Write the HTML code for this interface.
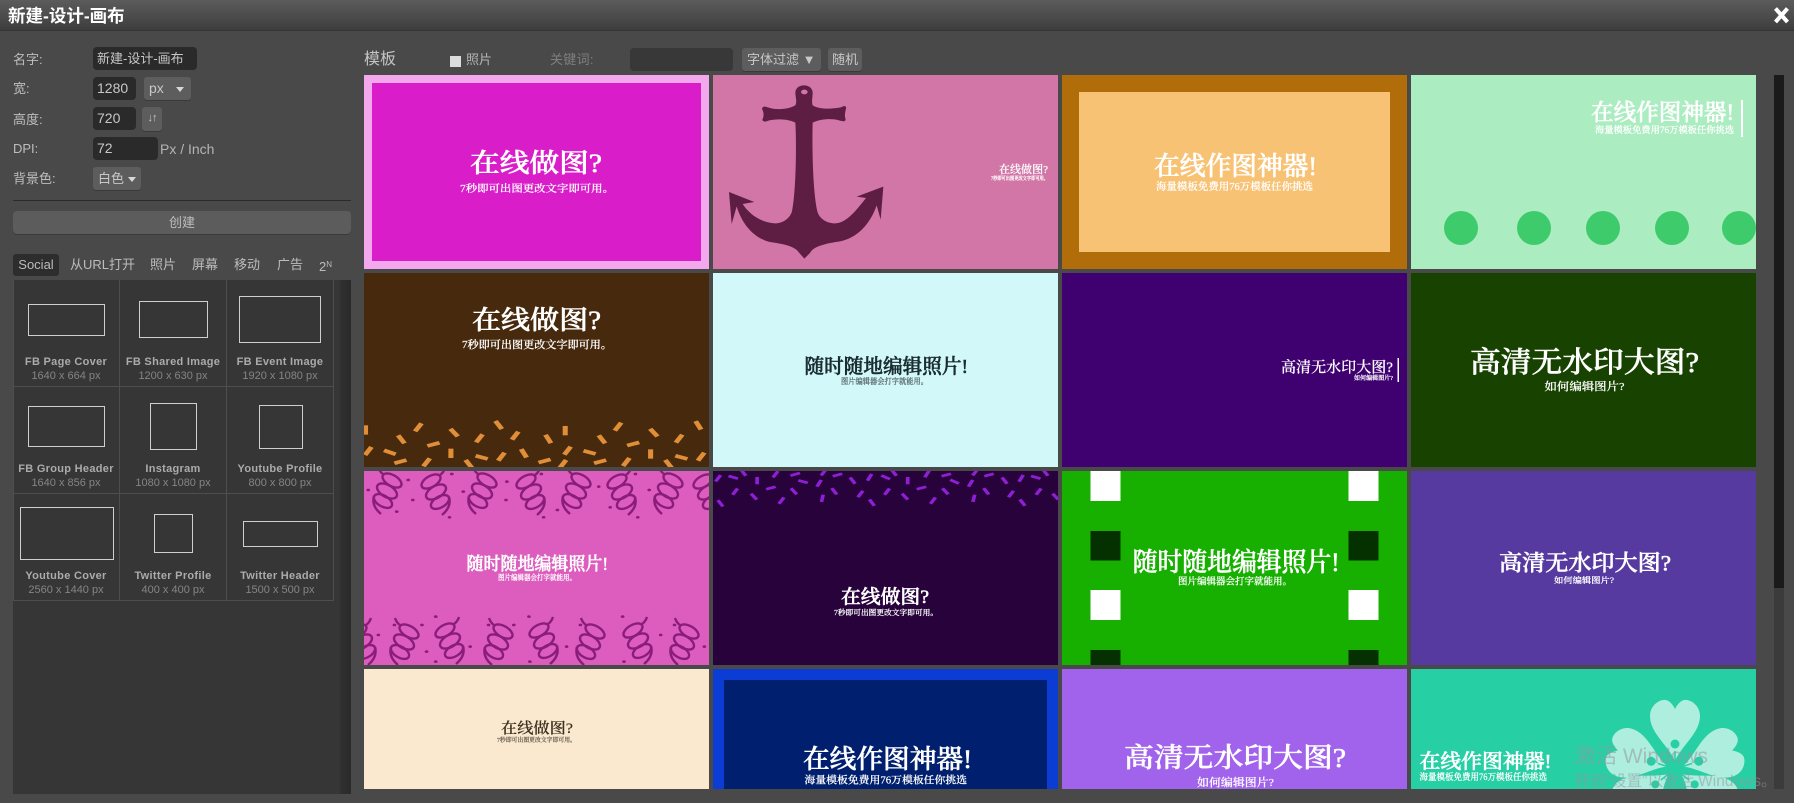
<!DOCTYPE html>
<html lang="zh"><head><meta charset="utf-8"><title>新建-设计-画布</title>
<style>
html,body{margin:0;padding:0;width:1794px;height:803px;overflow:hidden;background:#494949}
body{position:relative;font-family:"Liberation Sans","Noto Sans CJK SC",sans-serif;color:#c4c4c4;font-size:14px}
.a{position:absolute;white-space:nowrap}
.lb{position:absolute;left:13px;white-space:nowrap;line-height:20px;height:20px;color:#bdbdbd;font-size:13px}
.in{position:absolute;background:#2a2a2a;border-radius:4px;color:#c8c8c8;line-height:23px;height:23px;padding-left:4px;box-sizing:border-box;white-space:nowrap}
.sel{position:absolute;background:#5d5d5d;border-radius:3px;color:#c8c8c8;height:23px;line-height:23px;box-sizing:border-box;white-space:nowrap;box-shadow:0 1px 0 #3a3a3a;font-size:13px}
.car{position:absolute;width:0;height:0;border-left:4.5px solid transparent;border-right:4.5px solid transparent;border-top:5px solid #d8d8d8}
.tab{position:absolute;top:254px;height:22px;line-height:22px;font-size:13px;color:#bcbcbc;white-space:nowrap}
.n{position:absolute;width:106px;text-align:center;font-weight:bold;font-size:11px;letter-spacing:.3px;color:#ababab;white-space:nowrap}
.p{position:absolute;width:106px;text-align:center;font-size:11px;color:#858585;white-space:nowrap}
.r{position:absolute;box-sizing:border-box;border:1px solid #cfcfcf}
.l{position:absolute;background:#4e4e4e}
svg text{font-family:"Liberation Serif","Noto Serif CJK SC",serif;font-weight:500;fill:#fff;stroke:#fff;stroke-width:.2px}
svg text[font-size="18"],svg text[font-size="19"],svg text[font-size="20"],svg text[font-size="22"],svg text[font-size="23"],svg text[font-size="26"],svg text[font-size="27"],svg text[font-size="29"]{stroke-width:.6px}
</style></head><body>
<div class="a" style="left:0;top:0;width:1794px;height:30px;background:linear-gradient(#5c5c5c,#3d3d3d);border-bottom:1px solid #353535"></div>
<div class="a" style="left:8px;top:4px;font-size:17.5px;font-weight:bold;color:#fff;line-height:24px">新建-设计-画布</div>

<div class="lb" style="top:50px">名字:</div>
<div class="in" style="left:93px;top:47px;width:104px;font-size:13px">新建-设计-画布</div>
<div class="lb" style="top:79px">宽:</div>
<div class="in" style="left:93px;top:77px;width:43px">1280</div>
<div class="sel" style="left:144px;top:77px;width:47px;padding-left:5px;font-size:14px">px<span class="car" style="left:32px;top:10px"></span></div>
<div class="lb" style="top:110px">高度:</div>
<div class="in" style="left:93px;top:107px;width:43px">720</div>
<div class="sel" style="left:142px;top:107px;width:20px;height:24px;text-align:center;font-size:11px;font-weight:bold;letter-spacing:-1px">↓↑</div>
<div class="lb" style="top:139px">DPI:</div>
<div class="in" style="left:93px;top:137px;width:65px">72</div>
<div class="a" style="left:160px;top:139px;line-height:20px;color:#b4b4b4">Px / Inch</div>
<div class="lb" style="top:169px">背景色:</div>
<div class="sel" style="left:93px;top:167px;width:48px;padding-left:5px">白色<span class="car" style="left:35px;top:10px"></span></div>
<div class="a" style="left:13px;top:200px;width:338px;height:1px;background:#2b2b2b"></div>
<div class="sel" style="left:13px;top:211px;width:338px;height:23px;text-align:center;border-radius:4px;background:#5c5c5c;color:#bdbdbd">创建</div>

<div class="tab" style="left:13px;width:46px;background:#2d2d2d;border-radius:3px;text-align:center">Social</div>
<div class="tab" style="left:70px">从URL打开</div>
<div class="tab" style="left:150px">照片</div>
<div class="tab" style="left:192px">屏幕</div>
<div class="tab" style="left:234px">移动</div>
<div class="tab" style="left:277px">广告</div>
<div class="tab" style="left:319px">2<span style="font-size:8px;vertical-align:4px">N</span></div>

<div class="a" style="left:13px;top:280px;width:328px;height:514px;background:#363636"></div>
<div class="a" style="left:340px;top:280px;width:11px;height:514px;background:linear-gradient(90deg,#303030,#2a2a2a)"></div>
<div class="l" style="left:13px;top:280px;width:1px;height:321px"></div>
<div class="l" style="left:119px;top:280px;width:1px;height:321px"></div>
<div class="l" style="left:226px;top:280px;width:1px;height:321px"></div>
<div class="l" style="left:333px;top:280px;width:1px;height:321px"></div>
<div class="l" style="left:13px;top:386px;width:321px;height:1px"></div>
<div class="l" style="left:13px;top:493px;width:321px;height:1px"></div>
<div class="l" style="left:13px;top:600px;width:321px;height:1px"></div>

<div class="r" style="left:28px;top:304px;width:77px;height:32px"></div>
<div class="r" style="left:139px;top:301px;width:69px;height:37px"></div>
<div class="r" style="left:239px;top:296px;width:82px;height:47px"></div>
<div class="r" style="left:28px;top:406px;width:77px;height:41px"></div>
<div class="r" style="left:150px;top:403px;width:47px;height:47px"></div>
<div class="r" style="left:259px;top:405px;width:44px;height:44px"></div>
<div class="r" style="left:20px;top:507px;width:94px;height:53px"></div>
<div class="r" style="left:154px;top:514px;width:39px;height:39px"></div>
<div class="r" style="left:243px;top:521px;width:75px;height:26px"></div>

<div class="n" style="left:13px;top:356px">FB Page Cover</div><div class="p" style="left:13px;top:370px">1640 x 664 px</div>
<div class="n" style="left:120px;top:356px">FB Shared Image</div><div class="p" style="left:120px;top:370px">1200 x 630 px</div>
<div class="n" style="left:227px;top:356px">FB Event Image</div><div class="p" style="left:227px;top:370px">1920 x 1080 px</div>
<div class="n" style="left:13px;top:463px">FB Group Header</div><div class="p" style="left:13px;top:477px">1640 x 856 px</div>
<div class="n" style="left:120px;top:463px">Instagram</div><div class="p" style="left:120px;top:477px">1080 x 1080 px</div>
<div class="n" style="left:227px;top:463px">Youtube Profile</div><div class="p" style="left:227px;top:477px">800 x 800 px</div>
<div class="n" style="left:13px;top:570px">Youtube Cover</div><div class="p" style="left:13px;top:584px">2560 x 1440 px</div>
<div class="n" style="left:120px;top:570px">Twitter Profile</div><div class="p" style="left:120px;top:584px">400 x 400 px</div>
<div class="n" style="left:227px;top:570px">Twitter Header</div><div class="p" style="left:227px;top:584px">1500 x 500 px</div>

<div class="a" style="left:364px;top:48px;font-size:16px;line-height:24px;color:#c4c4c4">模板</div>
<div class="a" style="left:450px;top:56px;width:11px;height:11px;background:#dcdcdc"></div>
<div class="a" style="left:466px;top:50px;font-size:13px;line-height:20px;color:#b4b4b4">照片</div>
<div class="a" style="left:550px;top:50px;font-size:13px;line-height:20px;color:#7e7e7e;letter-spacing:.3px">关键词:</div>
<div class="a" style="left:630px;top:48px;width:103px;height:23px;background:#383838;border-radius:4px"></div>
<div class="sel" style="left:742px;top:48px;width:79px;padding-left:5px">字体过滤 ▼</div>
<div class="sel" style="left:828px;top:48px;width:34px;padding-left:4px">随机</div>

<svg class="a" style="left:0;top:0" width="1794" height="803" viewBox="0 0 1794 803" xmlns="http://www.w3.org/2000/svg">
<defs>
<rect id="c" x="-5.500" y="-14" width="11" height="28"/>
<rect id="d" x="-4" y="-11" width="8" height="22"/>
<g id="s" fill="none" stroke-width="2.400">
<ellipse cx="5" cy="-10.500" rx="10.500" ry="5.500" transform="rotate(30 5 -10.500)"/>
<ellipse cx="0" cy="0" rx="11" ry="6" transform="rotate(30 0 0)"/>
<ellipse cx="-4" cy="10" rx="10" ry="5.500" transform="rotate(30 -4 10)"/>
<path d="M-13 5C-15 12-12 18-6 23M-4 -17C-7 -19-8 -21-9 -24"/>
</g>
<path id="h" d="M0-8C-7-24-25-36-25-53C-25-64-15-70-9-69C-5-68-2-64 0-60C2-64 5-68 9-69C15-70 25-64 25-53C25-36 7-24 0-8Z"/>
</defs>

<svg x="364" y="75" width="345" height="194" viewBox="364 75 345 194">
<rect x="364" y="75" width="345" height="194" fill="#f3a8ee"/><rect x="372" y="83" width="329" height="178" fill="#d91ec9"/>
<text x="470" y="172" font-size="26" textLength="132" lengthAdjust="spacingAndGlyphs">在线做图?</text>
<text x="460" y="192" font-size="10" textLength="154" lengthAdjust="spacingAndGlyphs">7秒即可出图更改文字即可用。</text>
</svg>

<svg x="713" y="75" width="345" height="194" viewBox="713 75 345 194">
<rect x="713" y="75" width="345" height="194" fill="#d176a6"/>
<g transform="translate(720 78) scale(.33333)">
<path fill="#5e1d42" fill-rule="evenodd" d="M252 22C268 22 278 32 278 44C278 58 274 70 278 82C300 96 340 92 362 88L372 84C378 84 380 88 377 96C374 108 374 118 377 124C376 132 368 130 360 128C340 120 300 122 278 134C276 200 278 340 292 400C298 422 320 436 345 436C380 436 410 395 438 360L410 356L490 326L482 425L470 382C450 440 410 480 360 490C320 496 280 504 270 525L253 542L238 525C225 504 190 498 150 492C110 482 70 450 50 385L35 438L27 342L103 372L68 378C85 405 120 434 165 436C190 436 210 420 216 400C228 340 230 200 226 134C205 122 165 122 145 128C138 132 128 132 127 125C132 115 132 105 127 95C125 88 130 85 136 86L150 90C170 96 205 94 226 82C232 70 226 58 226 44C226 32 236 22 252 22ZM253 35A10 7 0 1 0 253.100 49A10 7 0 1 0 253 35Z"/>
</g>
<text x="999" y="173" font-size="11" textLength="49" lengthAdjust="spacingAndGlyphs">在线做图?</text>
<text x="991" y="180" font-size="5" textLength="57" lengthAdjust="spacingAndGlyphs">7秒即可出图更改文字即可用。</text>
</svg>

<svg x="1062" y="75" width="345" height="194" viewBox="1062 75 345 194">
<rect x="1062" y="75" width="345" height="194" fill="#b26d0b"/><rect x="1079" y="92" width="311" height="160" fill="#f8c275"/>
<text x="1154" y="175" font-size="26" textLength="163" lengthAdjust="spacingAndGlyphs">在线作图神器!</text>
<text x="1156" y="190" font-size="10" textLength="157" lengthAdjust="spacingAndGlyphs">海量模板免费用76万模板任你挑选</text>
</svg>

<svg x="1411" y="75" width="345" height="194" viewBox="1411 75 345 194">
<rect x="1411" y="75" width="345" height="194" fill="#abecc0"/>
<g fill="#3ecb6c"><circle cx="1461" cy="228" r="17"/><circle cx="1534" cy="228" r="17"/><circle cx="1603" cy="228" r="17"/><circle cx="1672" cy="228" r="17"/><circle cx="1739" cy="228" r="17"/></g>
<text x="1591" y="120" font-size="23" textLength="143" lengthAdjust="spacingAndGlyphs">在线作图神器!</text>
<text x="1595" y="133" font-size="9" textLength="139" lengthAdjust="spacingAndGlyphs">海量模板免费用76万模板任你挑选</text>
<rect x="1741" y="100" width="2" height="37" fill="#fff"/>
</svg>

<svg x="364" y="273" width="345" height="194" viewBox="364 273 345 194">
<rect x="364" y="273" width="345" height="194" fill="#472a0e"/>
<g transform="translate(360 270) scale(.4591 .3333)" fill="#e08e37">
<use href="#c" transform="translate(12 480)"/><use href="#c" transform="translate(127 472) rotate(30)"/><use href="#c" transform="translate(90 508) rotate(-30)"/><use href="#c" transform="translate(205 488) rotate(-35)"/><use href="#c" transform="translate(260 505) rotate(30)"/><use href="#c" transform="translate(302 465) rotate(-30)"/><use href="#c" transform="translate(338 497) rotate(30)"/><use href="#c" transform="translate(410 507) rotate(-25)"/><use href="#c" transform="translate(447 482)"/><use href="#c" transform="translate(562 470) rotate(30)"/><use href="#c" transform="translate(527 508) rotate(-30)"/><use href="#c" transform="translate(640 488) rotate(-35)"/><use href="#c" transform="translate(695 506) rotate(30)"/><use href="#c" transform="translate(737 466) rotate(-25)"/><use href="#c" transform="translate(18 543) rotate(30)"/><use href="#c" transform="translate(65 547) rotate(-65)"/><use href="#c" transform="translate(160 523) rotate(70)"/><use href="#c" transform="translate(198 550)"/><use href="#c" transform="translate(265 562) rotate(-70)"/><use href="#c" transform="translate(308 560) rotate(30)"/><use href="#c" transform="translate(357 550) rotate(-25)"/><use href="#c" transform="translate(452 542) rotate(30)"/><use href="#c" transform="translate(500 547) rotate(-70)"/><use href="#c" transform="translate(595 522) rotate(70)"/><use href="#c" transform="translate(633 552)"/><use href="#c" transform="translate(700 562) rotate(-70)"/><use href="#c" transform="translate(743 560) rotate(30)"/><use href="#c" transform="translate(88 575) rotate(70)"/><use href="#c" transform="translate(145 577) rotate(30)"/><use href="#c" transform="translate(237 582) rotate(-30)"/><use href="#c" transform="translate(402 573) rotate(70)"/><use href="#c" transform="translate(442 582) rotate(30)"/><use href="#c" transform="translate(523 575) rotate(70)"/><use href="#c" transform="translate(580 576) rotate(30)"/><use href="#c" transform="translate(672 582) rotate(-30)"/>
</g>
<text x="472" y="329" font-size="26" textLength="129" lengthAdjust="spacingAndGlyphs">在线做图?</text>
<text x="462" y="348" font-size="10.500" textLength="150" lengthAdjust="spacingAndGlyphs">7秒即可出图更改文字即可用。</text>
</svg>

<svg x="713" y="273" width="345" height="194" viewBox="713 273 345 194">
<rect x="713" y="273" width="345" height="194" fill="#d2f8fa"/>
<text style="fill:#1a2c30;stroke:#1a2c30" x="804.500" y="373" font-size="20" textLength="163.500" lengthAdjust="spacingAndGlyphs">随时随地编辑照片!</text>
<text style="fill:#5a6a6e;stroke:#5a6a6e" x="841" y="384" font-size="8" textLength="87" lengthAdjust="spacingAndGlyphs">图片编辑器会打字就能用。</text>
</svg>

<svg x="1062" y="273" width="345" height="194" viewBox="1062 273 345 194">
<rect x="1062" y="273" width="345" height="194" fill="#3f0070"/>
<text x="1281" y="372" font-size="15" textLength="112" lengthAdjust="spacingAndGlyphs">高清无水印大图?</text>
<text x="1354" y="380" font-size="6" textLength="39" lengthAdjust="spacingAndGlyphs">如何编辑图片?</text>
<rect x="1397.500" y="358" width="1.500" height="24" fill="#fff"/>
</svg>

<svg x="1411" y="273" width="345" height="194" viewBox="1411 273 345 194">
<rect x="1411" y="273" width="345" height="194" fill="#174200"/>
<text x="1470" y="372" font-size="29" textLength="229" lengthAdjust="spacingAndGlyphs">高清无水印大图?</text>
<text x="1544.500" y="390" font-size="11" textLength="80" lengthAdjust="spacingAndGlyphs">如何编辑图片?</text>
</svg>

<svg x="364" y="471" width="345" height="194" viewBox="364 471 345 194">
<rect x="364" y="471" width="345" height="194" fill="#dc5dbd"/>
<g stroke="#8a1d7a">
<use href="#s" transform="translate(387 491)"/><use href="#s" transform="translate(436 492) scale(-1 1)"/><use href="#s" transform="translate(482 491)"/><use href="#s" transform="translate(531 492) scale(-1 1)"/><use href="#s" transform="translate(576 491)"/><use href="#s" transform="translate(622 492) scale(-1 1)"/><use href="#s" transform="translate(668 491)"/><use href="#s" transform="translate(708 492) scale(-1 1)"/>
<use href="#s" transform="translate(362 642) scale(-1 1)"/><use href="#s" transform="translate(404 642)"/><use href="#s" transform="translate(450 641) scale(-1 1)"/><use href="#s" transform="translate(498 642)"/><use href="#s" transform="translate(544 641) scale(-1 1)"/><use href="#s" transform="translate(590 642)"/><use href="#s" transform="translate(638 641) scale(-1 1)"/><use href="#s" transform="translate(684 642)"/>
</g>
<g transform="translate(360 270) scale(.4591 .3333)" fill="#8a1d7a">
<circle cx="18" cy="660" r="4"/><circle cx="115" cy="690" r="4"/><circle cx="200" cy="612" r="4"/><circle cx="195" cy="742" r="4"/><circle cx="105" cy="630" r="4"/><circle cx="225" cy="665" r="4"/><circle cx="318" cy="690" r="4"/><circle cx="395" cy="612" r="4"/><circle cx="400" cy="742" r="4"/><circle cx="320" cy="635" r="4"/><circle cx="430" cy="720" r="4"/><circle cx="520" cy="650" r="4"/><circle cx="545" cy="712" r="4"/><circle cx="600" cy="612" r="4"/><circle cx="605" cy="742" r="4"/><circle cx="630" cy="660" r="4"/><circle cx="80" cy="725" r="4"/><circle cx="75" cy="1065" r="4"/><circle cx="135" cy="1065" r="4"/><circle cx="145" cy="1145" r="4"/><circle cx="165" cy="1040" r="4"/><circle cx="165" cy="1175" r="4"/><circle cx="240" cy="1130" r="4"/><circle cx="280" cy="1065" r="4"/><circle cx="335" cy="1065" r="4"/><circle cx="368" cy="1040" r="4"/><circle cx="370" cy="1175" r="4"/><circle cx="450" cy="1130" r="4"/><circle cx="480" cy="1065" r="4"/><circle cx="572" cy="1040" r="4"/><circle cx="575" cy="1175" r="4"/><circle cx="655" cy="1095" r="4"/><circle cx="685" cy="1065" r="4"/><circle cx="750" cy="1130" r="4"/><circle cx="40" cy="1095" r="4"/>
</g>
<text x="466.500" y="570" font-size="18" textLength="141.500" lengthAdjust="spacingAndGlyphs">随时随地编辑照片!</text>
<text x="498" y="580" font-size="7.500" textLength="78" lengthAdjust="spacingAndGlyphs">图片编辑器会打字就能用。</text>
</svg>

<svg x="713" y="471" width="345" height="194" viewBox="713 471 345 194">
<rect x="713" y="471" width="345" height="194" fill="#27023b"/>
<g transform="translate(360 270) scale(.4591 .3333)" fill="#8f1fd6">
<use href="#d" transform="translate(780 625) rotate(30)"/><use href="#d" transform="translate(813 622) rotate(-70)"/><use href="#d" transform="translate(835 608) rotate(-30)"/><use href="#d" transform="translate(865 632)"/><use href="#d" transform="translate(817 665) rotate(30)"/><use href="#d" transform="translate(858 680) rotate(-35)"/><use href="#d" transform="translate(905 613) rotate(30)"/><use href="#d" transform="translate(948 613) rotate(70)"/><use href="#d" transform="translate(965 635) rotate(-70)"/><use href="#d" transform="translate(895 654) rotate(70)"/><use href="#d" transform="translate(945 664) rotate(-35)"/><use href="#d" transform="translate(918 692) rotate(30)"/><use href="#d" transform="translate(785 700) rotate(-30)"/><use href="#d" transform="translate(1010 607) rotate(30)"/><use href="#d" transform="translate(1040 615) rotate(70)"/><use href="#d" transform="translate(1073 632) rotate(-30)"/><use href="#d" transform="translate(1110 622) rotate(25)"/><use href="#d" transform="translate(1000 640) rotate(25)"/><use href="#d" transform="translate(1033 664) rotate(-30)"/><use href="#d" transform="translate(1007 685) rotate(10)"/><use href="#d" transform="translate(1090 672) rotate(30)"/><use href="#d" transform="translate(1115 698) rotate(-30)"/><use href="#d" transform="translate(1145 622) rotate(-60)"/><use href="#d" transform="translate(1163 608) rotate(-30)"/><use href="#d" transform="translate(1193 632)"/><use href="#d" transform="translate(1148 665) rotate(30)"/><use href="#d" transform="translate(1187 680) rotate(-35)"/><use href="#d" transform="translate(1235 612) rotate(25)"/><use href="#d" transform="translate(1277 615) rotate(70)"/><use href="#d" transform="translate(1295 635) rotate(-60)"/><use href="#d" transform="translate(1223 654) rotate(70)"/><use href="#d" transform="translate(1275 664) rotate(-35)"/><use href="#d" transform="translate(1248 692) rotate(30)"/><use href="#d" transform="translate(1340 607) rotate(30)"/><use href="#d" transform="translate(1370 615) rotate(70)"/><use href="#d" transform="translate(1404 632) rotate(-30)"/><use href="#d" transform="translate(1440 625) rotate(25)"/><use href="#d" transform="translate(1330 640) rotate(25)"/><use href="#d" transform="translate(1364 664) rotate(-30)"/><use href="#d" transform="translate(1337 685) rotate(10)"/><use href="#d" transform="translate(1418 672) rotate(30)"/><use href="#d" transform="translate(1443 698) rotate(-30)"/><use href="#d" transform="translate(1472 622) rotate(-70)"/><use href="#d" transform="translate(1493 608) rotate(-30)"/><use href="#d" transform="translate(1478 665) rotate(30)"/><use href="#d" transform="translate(1515 680) rotate(-35)"/>
</g>
<text x="841" y="603" font-size="19" textLength="88" lengthAdjust="spacingAndGlyphs">在线做图?</text>
<text x="834" y="615" font-size="7.500" textLength="104" lengthAdjust="spacingAndGlyphs">7秒即可出图更改文字即可用。</text>
</svg>

<svg x="1062" y="471" width="345" height="194" viewBox="1062 471 345 194">
<rect x="1062" y="471" width="345" height="194" fill="#17b000"/>
<g fill="#fff"><rect x="1090.500" y="471" width="30" height="30"/><rect x="1348.500" y="471" width="30" height="30"/><rect x="1090.500" y="590" width="30" height="30"/><rect x="1348.500" y="590" width="30" height="30"/></g>
<g fill="#053000"><rect x="1090.500" y="531" width="30" height="29.500"/><rect x="1348.500" y="531" width="30" height="29.500"/><rect x="1090.500" y="650" width="30" height="15"/><rect x="1348.500" y="650" width="30" height="15"/></g>
<text x="1132.600" y="571" font-size="26" textLength="207" lengthAdjust="spacingAndGlyphs">随时随地编辑照片!</text>
<text x="1178" y="584.500" font-size="9.500" textLength="114" lengthAdjust="spacingAndGlyphs">图片编辑器会打字就能用。</text>
</svg>

<svg x="1411" y="471" width="345" height="194" viewBox="1411 471 345 194">
<rect x="1411" y="471" width="345" height="194" fill="#563aa0"/>
<text x="1499" y="570.500" font-size="22" textLength="172" lengthAdjust="spacingAndGlyphs">高清无水印大图?</text>
<text x="1554" y="583" font-size="8" textLength="60" lengthAdjust="spacingAndGlyphs">如何编辑图片?</text>
</svg>

<svg x="364" y="669" width="345" height="120" viewBox="364 669 345 120">
<rect x="364" y="669" width="345" height="120" fill="#fbe9cf"/>
<text style="fill:#3a3020;stroke:#3a3020" x="501" y="733" font-size="15" textLength="72" lengthAdjust="spacingAndGlyphs">在线做图?</text>
<text style="fill:#6e6456;stroke:#6e6456" x="497" y="742" font-size="6" textLength="79" lengthAdjust="spacingAndGlyphs">7秒即可出图更改文字即可用。</text>
</svg>

<svg x="713" y="669" width="345" height="120" viewBox="713 669 345 120">
<rect x="713" y="669" width="345" height="120" fill="#0b3dd4"/><rect x="724" y="680" width="323" height="109" fill="#00206f"/>
<text x="803" y="768" font-size="26" textLength="169" lengthAdjust="spacingAndGlyphs">在线作图神器!</text>
<text x="804.500" y="783.500" font-size="10" textLength="162.500" lengthAdjust="spacingAndGlyphs">海量模板免费用76万模板任你挑选</text>
</svg>

<svg x="1062" y="669" width="345" height="120" viewBox="1062 669 345 120">
<rect x="1062" y="669" width="345" height="120" fill="#a162ec"/>
<text x="1124" y="767" font-size="27" textLength="222" lengthAdjust="spacingAndGlyphs">高清无水印大图?</text>
<text x="1197" y="786" font-size="11" textLength="77" lengthAdjust="spacingAndGlyphs">如何编辑图片?</text>
</svg>

<svg x="1411" y="669" width="345" height="120" viewBox="1411 669 345 120">
<rect x="1411" y="669" width="345" height="120" fill="#27cfa4"/>
<g transform="translate(1675 769)" fill="#aeeede"><use href="#h"/><use href="#h" transform="rotate(-72)"/><use href="#h" transform="rotate(72)"/><use href="#h" transform="rotate(-128)"/><use href="#h" transform="rotate(128)"/>
<g fill="#27cfa4"><circle cy="-25" r="4.500"/><circle cy="-25" r="4.500" transform="rotate(-72)"/><circle cy="-25" r="4.500" transform="rotate(72)"/><circle cy="-25" r="4" transform="rotate(-128)"/><circle cy="-25" r="4" transform="rotate(128)"/><circle r="7"/></g>
<g stroke="#27cfa4" stroke-width="1.500"><path d="M0 0V-18"/><path d="M0 0V-18" transform="rotate(-72)"/><path d="M0 0V-18" transform="rotate(72)"/><path d="M0 0V-18" transform="rotate(-128)"/><path d="M0 0V-18" transform="rotate(128)"/><path d="M0 0V20"/></g></g>
<text x="1419.500" y="768" font-size="20" textLength="132" lengthAdjust="spacingAndGlyphs">在线作图神器!</text>
<text x="1419.500" y="780" font-size="9" textLength="127.500" lengthAdjust="spacingAndGlyphs">海量模板免费用76万模板任你挑选</text>
</svg>

<path d="M1775.500 8.500L1787.500 22M1787.500 8.500L1775.500 22" stroke="#fff" stroke-width="4" fill="none"/>
<rect x="1774" y="75" width="10" height="714" fill="#3b3b3b"/>
<rect x="1774" y="75" width="10" height="513" fill="#1a1a1a"/>
</svg>

<div class="a" style="left:1575px;top:743px;font-size:21px;line-height:28px;color:rgba(150,150,160,.55)">激活 Windows</div>
<div class="a" style="left:1575px;top:772px;font-size:15.500px;line-height:20px;color:rgba(150,150,160,.55)">转到“设置”以激活 Windows。</div>
</body></html>
